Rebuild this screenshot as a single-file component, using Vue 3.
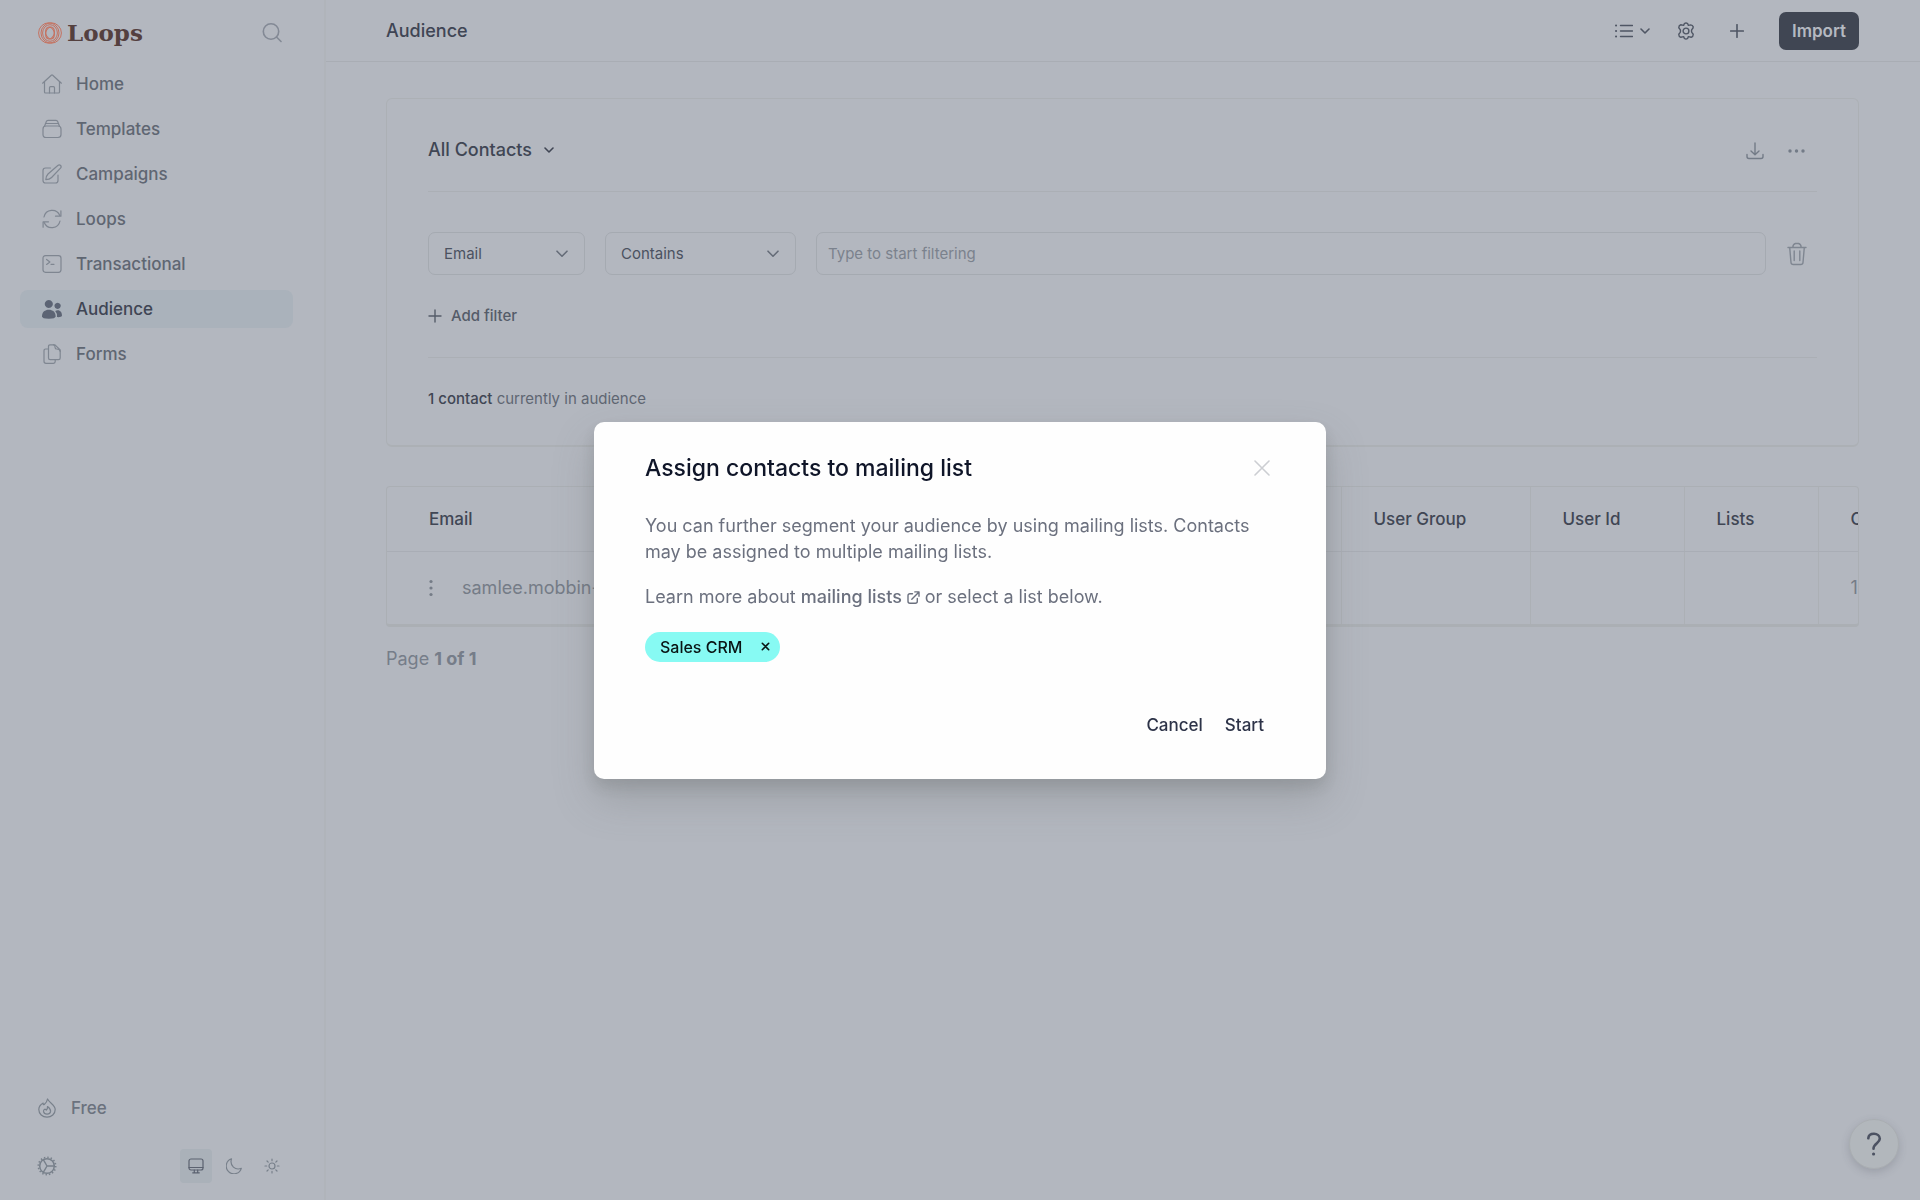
<script setup>
import { ref } from 'vue'

const navItems = [
  { label: 'Home', paths: ['M0.6 9.2 L9.3 1.2 Q10 0.7 10.7 1.2 L19.4 9.2', 'M2.5 7.6V18q0 1 1 1h13q1 0 1-1V7.6', 'M7.5 19v-5.3q0-1 1-1h3q1 0 1 1V19'] },
  { label: 'Templates', paths: ['M4 7h12q3 0 3 3v5.500q0 3-3 3H4q-3 0-3-3V10q0-3 3-3z', 'M2.500 7.300 L4.300 2.600Q4.800 1.400 6 1.400h8q1.200 0 1.700 1.200L17.500 7.300', 'M3.500 4.500h13'] },
  { label: 'Campaigns', paths: ['M8.500 4H3.500Q1 4 1 6.500v10Q1 19 3.500 19h10q2.500 0 2.500-2.500V11', 'M3.800 15.600 Q3.800 12.400 6 10 L15.800 1.500 Q17.300 0.300 18.600 1.500 Q19.700 2.800 18.500 4.200 L9.600 13.500 Q7.500 15.600 3.800 15.600z'] },
  { label: 'Loops', paths: ['M2 8a8.300 8.300 0 0 1 15.800-1.500', 'M18.900 1.800v5.400h-5.400', 'M18 12a8.300 8.300 0 0 1-15.800 1.500', 'M1.100 18.200v-5.400h5.400'] },
  { label: 'Transactional', paths: ['M3.500 1.700h13Q19 1.700 19 4.200v11.600q0 2.500-2.500 2.500h-13Q1 18.300 1 15.800V4.200Q1 1.700 3.500 1.700z', 'M4.600 5.400l3.300 2.500-3.300 2.500', 'M9 10.300h3'] },
  { label: 'Audience', active: true, filled: true, paths: ['M6.800 1a4 4 0 1 0 .01 0z', 'M15.600 3.700a3.100 3.100 0 1 0 .01 0z', 'M0 17.200C0 12.800 3 10.700 6.800 10.700s6.800 2.100 6.800 6.500Q13.600 19.700 6.800 19.700T0 17.200z', 'M13.200 12q1.100-.7 2.500-.7c2.700 0 4.300 2.500 4.300 5.200 0 1.300-2.500 1.900-5 1.600q.600-3.500-1.800-6.100z'] },
  { label: 'Forms', paths: ['M8 .8h5l5.200 5.200v8q0 1.700-1.700 1.700H8.200Q6.500 15.700 6.500 14V2.500Q6.500.8 8 .8z', 'M11.500 .8q1.600.6 1.600 2.600 0 1.600 1.600 1.600 3 0 3.500 2.500', 'M6.500 5H3.700Q2 5 2 6.700v10.600Q2 19.300 4 19.300h7.500q1.700 0 1.700-1.700v-1.900'] }
]

const field = ref('Email')
const operator = ref('Contains')
const term = ref('')
const columns = ['User Group', 'User Id', 'Lists', 'Created']
</script>

<template>
  <div class="app">
    <aside class="sidebar">
      <div class="brand-row">
        <a href="#" class="brand">
          <svg width="24" height="22" viewBox="0 0 24 22" fill="none" stroke="#c5715f" stroke-width="1">
            <circle cx="10.800" cy="11" r="10.200" />
            <circle cx="13.200" cy="11" r="10.200" />
            <ellipse cx="12" cy="11" rx="7.400" ry="8.300" />
            <ellipse cx="12" cy="11" rx="4.200" ry="6.200" transform="rotate(-18 12 11)" />
            <ellipse cx="12" cy="11" rx="4.200" ry="6.200" transform="rotate(18 12 11)" />
          </svg>
          <span>Loops</span>
        </a>
        <button type="button" class="icon-button" aria-label="Search">
          <svg width="20" height="20" viewBox="0 0 20 20" class="line bold"><circle cx="9" cy="8.500" r="7.700" /><path d="M14.500 14l4.500 4.500" /></svg>
        </button>
      </div>

      <nav class="nav">
        <a v-for="item in navItems" :key="item.label" href="#" class="nav-item" :class="{ active: item.active }">
          <svg width="20" height="20" viewBox="0 0 20 20" :class="item.filled ? 'solid' : 'line'">
            <path v-for="d in item.paths" :key="d" :d="d" />
          </svg>
          <span>{{ item.label }}</span>
        </a>
      </nav>

      <div class="sidebar-footer">
        <a href="#" class="plan">
          <svg width="18" height="20" viewBox="0 0 18 20" class="line">
            <path d="M9.500 1Q9 4 6.500 6.200Q5 7.500 5.200 5Q.8 7.500.8 11.500a8.200 7.700 0 0 0 16.400 0C17.200 7 12 5.500 9.500 1z" />
            <path d="M9.500 8.500Q12.800 11 12.600 13.400A3.600 3.300 0 0 1 5.500 13.400Q5.400 11.800 6.800 11.200Q8 11.300 8.200 12.200Q9.800 11 9.500 8.500z" />
          </svg>
          <span>Free</span>
        </a>
        <div class="tools">
          <button type="button" class="icon-button" aria-label="Settings">
            <svg width="20" height="20" viewBox="0 0 20 20" class="line">
              <circle cx="10" cy="10" r="8.700" stroke-width="1.600" stroke-dasharray="1.400 2.020" stroke-linecap="butt" />
              <circle cx="10" cy="10" r="7.300" stroke-width="1.500" />
              <path d="M10 10h7.300M10 10L6.300 3.600M10 10L6.300 16.400" stroke-width="1.400" />
            </svg>
          </button>
          <div class="themes">
            <button type="button" class="theme selected" aria-label="System theme">
              <svg width="16" height="16" viewBox="0 0 16 16" class="line"><rect x="1" y="1" width="14" height="11" rx="2" /><path d="M1 9.500h14M6.300 12v2.500M9.700 12v2.500M4.700 14.800h6.600" /></svg>
            </button>
            <button type="button" class="theme" aria-label="Dark theme">
              <svg width="16" height="16" viewBox="0 0 16 16" class="line"><path d="M5.500.8A7.700 7.700 0 1 0 15.300 10.300C9.500 12.700 3.300 7.800 5.500.8z" /></svg>
            </button>
            <button type="button" class="theme" aria-label="Light theme">
              <svg width="16" height="16" viewBox="0 0 16 16" class="line"><circle cx="8" cy="8" r="3" /><path d="M8 1v1.700M8 13.300V15M1 8h1.700M13.300 8H15M3 3l1.200 1.200M11.800 11.800L13 13M3 13l1.200-1.200M11.800 4.200L13 3" /></svg>
            </button>
          </div>
        </div>
      </div>
    </aside>

    <main class="main">
      <header class="topbar">
        <h1>Audience</h1>
        <div class="actions">
          <button type="button" class="icon-button view" aria-label="View">
            <svg width="18" height="14" viewBox="0 0 18 14" class="line thick"><path d="M5.500 1.500h12M5.500 7h12M5.500 12.500h12" /><path d="M1 1.500h.1M1 7h.1M1 12.500h.1" stroke-width="2" /></svg>
            <svg width="10" height="6" viewBox="0 0 10 6" class="line bold"><path d="M1 1l4 4 4-4" /></svg>
          </button>
          <button type="button" class="icon-button" aria-label="Properties">
            <svg width="18" height="18" viewBox="0 0 18 18" class="line thick"><path d="M7.400 1.500Q9 .4 10.600 1.500L11.400 3.400 13.700 2.900Q15.600 3 16.200 4.800L16 6 14.800 7.600Q14.200 9 14.800 10.400L16.200 12.200Q16.300 14.700 14.200 15.200L11.400 14.600 10.600 16.500Q9 17.600 7.400 16.500L6.600 14.600 3.800 15.200Q1.700 14.700 1.800 12.200L3.200 10.400Q3.800 9 3.200 7.600L1.800 5.800Q1.700 3.300 3.800 2.800L6.600 3.400z" /><circle cx="9" cy="9" r="2.900" /></svg>
          </button>
          <button type="button" class="icon-button" aria-label="Add contact">
            <svg width="14" height="14" viewBox="0 0 14 14" class="line bold"><path d="M7 .7v12.600M.7 7h12.600" /></svg>
          </button>
          <button type="button" class="import">Import</button>
        </div>
      </header>

      <div class="content">
        <section class="card">
          <div class="card-head">
            <button type="button" class="segment">
              All Contacts
              <svg width="10" height="6" viewBox="0 0 10 6" class="line bold"><path d="M1 1l4 4 4-4" /></svg>
            </button>
            <div class="card-tools">
              <button type="button" class="icon-button" aria-label="Download">
                <svg width="18" height="18" viewBox="0 0 18 18" class="line thick"><path d="M9 1v11.500M5 9l4 3.700L13 9M1 12.500v2q0 2 2 2h12q2 0 2-2v-2" /></svg>
              </button>
              <button type="button" class="icon-button" aria-label="More">
                <svg width="18" height="4" viewBox="0 0 18 4" class="solid"><circle cx="2" cy="2" r="1.700" /><circle cx="8.500" cy="2" r="1.700" /><circle cx="15" cy="2" r="1.700" /></svg>
              </button>
            </div>
          </div>

          <form class="filters" @submit.prevent>
            <div class="filter-row">
              <div class="select narrow">
                <select v-model="field" aria-label="Field"><option>Email</option></select>
                <svg width="12" height="8" viewBox="0 0 12 8" class="line bold"><path d="M1 1.200l5 5 5-5" /></svg>
              </div>
              <div class="select wide">
                <select v-model="operator" aria-label="Condition"><option>Contains</option></select>
                <svg width="12" height="8" viewBox="0 0 12 8" class="line bold"><path d="M1 1.200l5 5 5-5" /></svg>
              </div>
              <input v-model="term" type="text" placeholder="Type to start filtering" aria-label="Filter value" />
              <button type="button" class="icon-button trash" aria-label="Remove filter">
                <svg width="20" height="24" viewBox="0 0 20 24" class="line thick"><path d="M1 5.500h18M2.700 5.500l1.300 15q.2 2 2.200 2h7.600q2 0 2.200-2l1.300-15M5.800 5.300Q6 2 8.500 1.500h3q2.500.5 2.700 3.800M7.200 9v9.500M12.800 9v9.500" /></svg>
              </button>
            </div>
            <button type="button" class="add-filter">
              <svg width="14" height="14" viewBox="0 0 14 14" class="line thick"><path d="M7 1v12M1 7h12" /></svg>
              Add filter
            </button>
          </form>

          <p class="count"><strong>1 contact</strong> currently in audience</p>
        </section>

        <div class="table-wrap">
          <table>
            <colgroup>
              <col class="col-email" />
              <col class="col-group" />
              <col class="col-id" />
              <col class="col-lists" />
              <col class="col-created" />
            </colgroup>
            <thead>
              <tr>
                <th scope="col">Email</th>
                <th v-for="column in columns" :key="column" scope="col">{{ column }}</th>
              </tr>
            </thead>
            <tbody>
              <tr>
                <td>
                  <div class="email-cell">
                    <button type="button" class="icon-button" aria-label="Contact actions">
                      <svg width="4" height="18" viewBox="0 0 4 18" class="solid"><circle cx="2" cy="2.500" r="1.600" /><circle cx="2" cy="9" r="1.600" /><circle cx="2" cy="15.500" r="1.600" /></svg>
                    </button>
                    samlee.mobbin-
                  </div>
                </td>
                <td></td>
                <td></td>
                <td></td>
                <td>1</td>
              </tr>
            </tbody>
          </table>
        </div>
        <p class="pages">Page <strong>1 of 1</strong></p>
      </div>
    </main>

    <button type="button" class="help" aria-label="Help">
      <svg width="16" height="24" viewBox="0 0 16 24" fill="none" stroke="currentColor" stroke-width="2.600" stroke-linecap="round"><path d="M2.300 6.300C2.500 3.500 4.800 1.800 8 1.800s5.800 2 5.800 5c0 4.400-6.300 4.700-6.300 10" /><path d="M7.500 22h.1" stroke-width="3" /></svg>
    </button>

    <div class="overlay">
      <section class="dialog" role="dialog" aria-modal="true" aria-labelledby="dialog-title">
        <div class="dialog-head">
          <h2 id="dialog-title">Assign contacts to mailing list</h2>
          <button type="button" class="icon-button close" aria-label="Close">
            <svg width="16" height="16" viewBox="0 0 16 16" class="line bold"><path d="M1 1l14 14M15 1L1 15" /></svg>
          </button>
        </div>
        <p>You can further segment your audience by using mailing lists. Contacts may be assigned to multiple mailing lists.</p>
        <p>
          Learn more about
          <a href="#">mailing lists
            <svg width="13" height="13" viewBox="0 0 13 13" class="line thick"><path d="M5.500 2.700H3Q1 2.700 1 4.700v5.500q0 2 2 2h5.300q2 0 2-2V7.500M4.800 8.300L12 1M7.800.9H12v4.300" /></svg></a>
          or select a list below.
        </p>
        <button type="button" class="chip">
          Sales CRM
          <svg width="9" height="9" viewBox="0 0 9 9" class="line bold"><path d="M1.300 1.300l6.400 6.400M7.700 1.300L1.300 7.700" /></svg>
        </button>
        <div class="dialog-actions">
          <button type="button">Cancel</button>
          <button type="button">Start</button>
        </div>
      </section>
    </div>
  </div>
</template>

<style>
body {
  margin: 0;
  background: #b3b7bf;
}
</style>

<style scoped>
* {
  box-sizing: border-box;
}

.app {
  display: flex;
  min-height: 100vh;
  background: #b3b7bf;
  color: #5f6672;
  font-family: Inter, "Liberation Sans", sans-serif;
  font-size: 18px;
  line-height: 26px;
}

button,
input,
select {
  margin: 0;
  padding: 0;
  border: 0;
  background: none;
  color: inherit;
  font: inherit;
}

a {
  color: inherit;
  text-decoration: none;
}

h1,
h2,
p {
  margin: 0;
}

svg {
  display: block;
  flex: none;
}

.line {
  fill: none;
  stroke: currentColor;
  stroke-width: 1.2;
  stroke-linecap: round;
  stroke-linejoin: round;
}

.line.thick {
  stroke-width: 1.4;
}

.line.bold {
  stroke-width: 1.6;
}

.solid {
  fill: currentColor;
}

.icon-button {
  display: flex;
  align-items: center;
  justify-content: center;
}

.sidebar {
  display: flex;
  flex: none;
  flex-direction: column;
  width: 326px;
  padding: 16px 31px 17px 20px;
  border-right: 2px solid #b0b4ba;
}

.brand-row {
  display: flex;
  align-items: center;
  justify-content: space-between;
  height: 34px;
  padding: 0 11px 0 18px;
  color: #838995;
}

.brand {
  display: flex;
  align-items: center;
  gap: 5px;
  color: #54403f;
  font-family: "DejaVu Serif", serif;
  font-size: 23px;
  font-weight: 700;
}

.nav {
  display: flex;
  flex-direction: column;
  gap: 7px;
  margin-top: 15px;
}

.nav-item {
  display: flex;
  align-items: center;
  gap: 14px;
  height: 38px;
  padding: 0 22px;
  border-radius: 8px;
  color: #5f6672;
  font-size: 17px;
  font-weight: 500;
}

.nav-item svg {
  color: #7f8691;
}

.nav-item.active {
  background: #aab2bb;
  color: #3f4554;
}

.nav-item.active svg {
  color: #5c6474;
}

.sidebar-footer {
  display: flex;
  flex-direction: column;
  gap: 24px;
  margin-top: auto;
  color: #78808b;
}

.plan {
  display: flex;
  align-items: center;
  gap: 15px;
  height: 34px;
  padding: 0 18px;
  font-size: 17px;
  font-weight: 500;
}

.plan span {
  color: #6b727e;
}

.tools {
  display: flex;
  align-items: center;
  justify-content: space-between;
  padding: 0 5px 0 17px;
}

.themes {
  display: flex;
  gap: 6px;
}

.theme {
  display: flex;
  align-items: center;
  justify-content: center;
  width: 32px;
  height: 34px;
  border-radius: 4px;
}

.theme.selected {
  background: #aab1b9;
  color: #5b6270;
}

.main {
  display: flex;
  flex: 1;
  flex-direction: column;
  min-width: 0;
}

.topbar {
  display: flex;
  align-items: center;
  justify-content: space-between;
  height: 62px;
  padding: 0 61px 0 60px;
  border-bottom: 1px solid #a9adb4;
}

h1 {
  color: #3f4554;
  font-size: 18px;
  font-weight: 500;
}

.actions {
  display: flex;
  align-items: center;
  color: #4f5664;
}

.view {
  gap: 7px;
  margin-right: 27px;
}

.actions .icon-button + .icon-button {
  margin-right: 35px;
}

.import {
  height: 38px;
  padding: 0 13px;
  border-radius: 7px;
  background: #404653;
  color: #b5b9c1;
  font-size: 17px;
  font-weight: 600;
}

.content {
  padding: 36px 61px 60px 60px;
}

.card {
  padding: 0 41px;
  border: 1px solid #acb0b5;
  border-bottom-width: 2px;
  border-radius: 6px;
}

.card-head {
  display: flex;
  align-items: center;
  justify-content: space-between;
  height: 93px;
  padding: 12px 11px 0 0;
  border-bottom: 1px solid #abafb5;
  color: #737b87;
}

.segment {
  display: flex;
  align-items: center;
  gap: 12px;
  padding-bottom: 2px;
  color: #404654;
  font-weight: 500;
}

.card-tools {
  display: flex;
  align-items: center;
  gap: 24px;
}

.filters {
  padding: 40px 0 28px;
  border-bottom: 1px solid #abafb5;
  font-size: 15px;
}

.filter-row {
  display: flex;
  align-items: center;
  gap: 20px;
}

.select {
  display: grid;
  align-items: center;
  height: 43px;
  border: 1px solid #a5aab1;
  border-radius: 7px;
  color: #4b5261;
}

.select.narrow {
  width: 157px;
}

.select.wide {
  width: 191px;
}

.select select,
.select svg {
  grid-area: 1 / 1;
}

.select select {
  width: 100%;
  height: 41px;
  padding: 0 15px;
  appearance: none;
  outline: none;
}

.select svg {
  justify-self: end;
  margin-right: 16px;
  color: #656c78;
  pointer-events: none;
}

.filter-row input {
  flex: 1;
  min-width: 0;
  height: 43px;
  padding: 0 11px;
  border: 1px solid #a5aab1;
  border-radius: 7px;
  outline: none;
}

.filter-row input::placeholder {
  color: #7b828d;
  opacity: 1;
}

.trash {
  width: 22px;
  margin-right: 9px;
  color: #7f8691;
}

.add-filter {
  display: flex;
  align-items: center;
  gap: 9px;
  margin-top: 28px;
  color: #555c69;
  font-weight: 500;
}

.count {
  padding: 28px 0 33px;
  font-size: 15px;
}

.count strong {
  color: #404654;
  font-weight: 500;
}

.table-wrap {
  margin-top: 39px;
  overflow: hidden;
  border: 1px solid #abafb4;
  border-bottom: 3px solid #abafb4;
  border-radius: 4px;
}

table {
  width: 1565px;
  border-collapse: collapse;
  table-layout: fixed;
}

.col-email {
  width: 954px;
}

.col-group {
  width: 189px;
}

.col-id {
  width: 154px;
}

.col-lists {
  width: 134px;
}

.col-created {
  width: 134px;
}

th,
td {
  padding: 0 32px;
  border-right: 1px solid #acb0b5;
  text-align: left;
}

th:first-child,
td:first-child {
  padding-left: 42px;
}

th {
  height: 64px;
  border-bottom: 1px solid #a9adb5;
  color: #404654;
  font-size: 17px;
  font-weight: 500;
}

td {
  height: 73px;
  color: #757c87;
}

.email-cell {
  display: flex;
  align-items: center;
  gap: 29px;
}

.pages {
  margin-top: 19px;
  color: #767d89;
}

.pages strong {
  font-weight: 700;
}

.help {
  position: fixed;
  right: 21px;
  bottom: 31px;
  display: flex;
  align-items: center;
  justify-content: center;
  width: 50px;
  height: 50px;
  border: 1px solid #a9adb1;
  border-radius: 50%;
  box-shadow: 0 3px 8px rgba(70, 75, 85, 0.22);
  background: #b2b7bc;
  color: #4c5262;
}

.overlay {
  position: fixed;
  inset: 0;
  display: flex;
  align-items: center;
  justify-content: center;
}

.dialog {
  width: 732px;
  padding: 31px 51px 35px;
  border-radius: 10px;
  box-shadow: 0 20px 40px rgba(100, 105, 105, 0.28), 0 8px 14px rgba(100, 105, 105, 0.22);
  background: #fefefe;
  color: #6b707e;
}

.dialog-head {
  display: flex;
  align-items: center;
  justify-content: space-between;
  padding-right: 5px;
}

h2 {
  color: #0f1528;
  font-size: 23px;
  font-weight: 500;
  line-height: 30px;
}

.close {
  color: #ccced2;
}

.dialog p {
  margin-top: 19px;
}

.dialog-head + p {
  margin-top: 30px;
}

.dialog p a {
  font-weight: 500;
}

.dialog p a svg {
  display: inline;
  margin: 0;
  vertical-align: -1px;
}

.chip {
  display: flex;
  align-items: center;
  gap: 19px;
  height: 30px;
  margin-top: 22px;
  padding: 0 10px 0 15px;
  border-radius: 15px;
  background: #87faf3;
  color: #091414;
  font-size: 16px;
  font-weight: 500;
}

.dialog-actions {
  display: flex;
  justify-content: flex-end;
  gap: 22px;
  margin-top: 44px;
  padding-right: 11px;
  color: #2d3348;
  font-size: 17px;
  font-weight: 500;
}

.dialog-actions button {
  height: 38px;
}
</style>
